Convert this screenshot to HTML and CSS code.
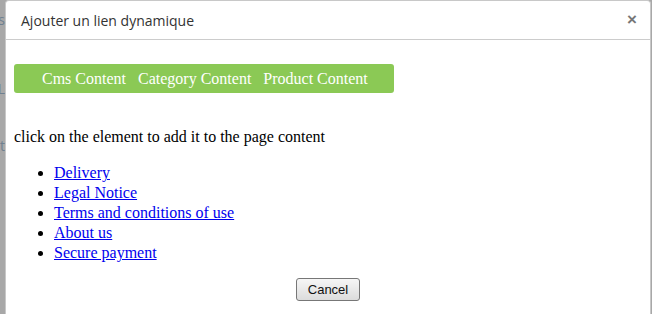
FILE: index.html
```html
<!DOCTYPE html>
<html lang="fr">
<head>
    <meta charset="UTF-8">
    <title>Ajouter un lien dynamique</title>
    <link rel="stylesheet" href="styles.css">
</head>
<body>
    <div class="backdrop">
        <div class="behind">
            <span>s</span>
            <span class="l">L</span>
            <span class="t">t</span>
        </div>
        <div class="modal">
            <div class="modal-header">
                <span class="modal-title">Ajouter un lien dynamique</span>
                <span class="close">&times;</span>
            </div>
            <div class="modal-body">
                <div class="tabs">
                    <span>Cms Content</span>
                    <span>Category Content</span>
                    <span>Product Content</span>
                </div>
                <p class="hint">click on the element to add it to the page content</p>
                <ul class="links">
                    <li><a href="#">Delivery</a></li>
                    <li><a href="#">Legal Notice</a></li>
                    <li><a href="#">Terms and conditions of use</a></li>
                    <li><a href="#">About us</a></li>
                    <li><a href="#">Secure payment</a></li>
                </ul>
                <div class="actions">
                    <button>Cancel</button>
                </div>
            </div>
        </div>
    </div>
</body>
</html>
```

FILE: styles.css
```css
body {
    margin: 0;
    background: #a8a8a8;
    font-family: "Liberation Serif", serif;
    overflow: hidden;
}
.backdrop {
    display: flex;
    height: 314px;
}
.behind {
    width: 5px;
    overflow: hidden;
    display: flex;
    flex-direction: column;
    font-family: "Open Sans", sans-serif;
    font-size: 14px;
    color: #6f8090;
    direction: rtl;
}
.behind span {
    margin-top: 10px;
}
.behind .l {
    margin-top: 50px;
}
.behind .t {
    margin-top: 38px;
}
.modal {
    width: 644px;
    background: #fff;
    border: 1px solid #c8c8c8;
    border-bottom: none;
    border-radius: 4px 4px 0 0;
}
.modal-header {
    display: flex;
    justify-content: space-between;
    align-items: center;
    height: 38px;
    padding: 0 13px 0 15px;
    border-bottom: 1px solid #ccc;
}
.modal-title {
    font-family: "Open Sans", sans-serif;
    font-size: 14px;
    color: #333;
}
.close {
    font-family: "Liberation Sans", sans-serif;
    font-size: 17px;
    font-weight: bold;
    color: #777;
}
.modal-body {
    padding: 24px 8px 0;
}
.tabs {
    display: flex;
    gap: 12px;
    width: 380px;
    box-sizing: border-box;
    height: 29px;
    align-items: center;
    padding: 0 0 0 28px;
    background: #8bc955;
    border-radius: 3px;
    color: #fff;
    font-size: 16px;
    white-space: nowrap;
}
.hint {
    margin: 35px 0 0;
    font-size: 16px;
    color: #000;
}
.links {
    margin: 17px 0 0;
    padding-left: 40px;
    font-size: 16px;
    line-height: 20px;
}
.links a {
    color: #00e;
}
.actions {
    display: flex;
    justify-content: center;
    margin-top: 15px;
}
.actions button {
    font-family: "Liberation Sans", sans-serif;
    font-size: 13px;
    padding: 3px 11px;
    color: #111;
    background: linear-gradient(#f6f6f6, #dcdcdc);
    border: 1px solid #777;
    border-radius: 3px;
}
```
